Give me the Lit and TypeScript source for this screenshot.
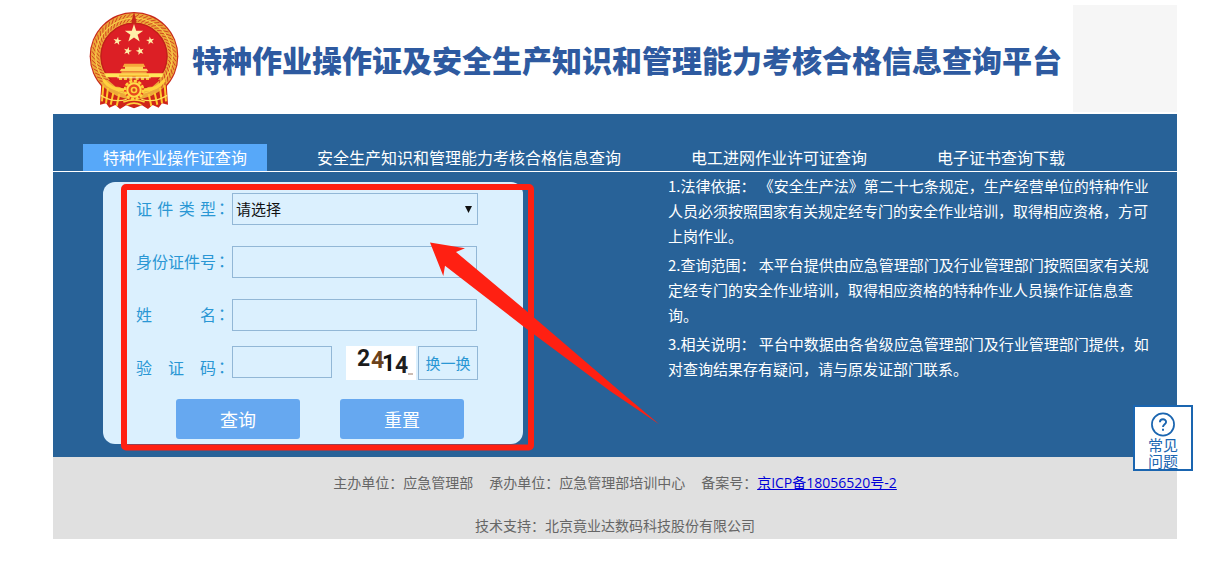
import { LitElement, html, css, svg } from "lit";
import { customElement, state } from "lit/decorators.js";

const star = (cx: number, cy: number, r: number, turn = 0) => {
  const pts: string[] = [];
  for (let i = 0; i < 10; i++) {
    const a = ((i * 36 - 90 + turn) * Math.PI) / 180;
    const d = i % 2 ? r * 0.39 : r;
    pts.push(`${(cx + d * Math.cos(a)).toFixed(1)},${(cy + d * Math.sin(a)).toFixed(1)}`);
  }
  return svg`<polygon fill="#fff0a8" points=${pts.join(" ")} />`;
};

@customElement("national-emblem")
class NationalEmblem extends LitElement {
  static styles = css`
    :host { display: block; }
    svg { display: block; width: 100px; height: 104px; }
  `;

  render() {
    const grains: unknown[] = [];
    for (let a = -222; a <= 42; a += 6) {
      const t = (a * Math.PI) / 180;
      const at = (r: number, d: number) => `${150 + r * Math.cos(t + d)} ${145 + r * Math.sin(t + d)}`;
      grains.push(svg`<path fill="none" stroke="#d2471f" stroke-width="3"
        d="M${at(104, 0)}L${at(114, 0.1)}M${at(117, 0.02)}L${at(127, 0.12)}" />`);
    }
    return html`<svg viewBox="0 0 300 312" role="img" aria-label="国徽">
      <path fill="#cf2418" d="M52 225L48 290L66 286L76 299L94 291L108 303L126 292L150 301L174 292L192 303L206 291L224 299L234 286L252 290L248 225Z" />
      <circle cx="150" cy="145" r="133" fill="#c8281b" />
      <circle cx="150" cy="145" r="115" fill="none" stroke="#eda93a" stroke-width="29" />
      ${grains}
      <circle cx="150" cy="145" r="115" fill="none" stroke="#fbd04a" stroke-width="3" />
      <circle cx="150" cy="145" r="99" fill="#dc1f25" stroke="#c3201b" stroke-width="4" />
      <path fill="#c8281b" d="M150 12L158 42L150 52L142 42Z" />
      ${star(150, 77, 29)} ${star(100, 99, 13, 10)} ${star(199, 98, 13, -10)}
      ${star(131, 129, 13, 15)} ${star(168, 129, 13, -15)}
      <path fill="#f6a83a" d="M121 167H179L184 177H116Z" />
      <path fill="#ffd25a" d="M123 176H177V182H123ZM112 182H188L193 190H107Z" />
      <path fill="#f2a33b" d="M112 190H188V197H112Z" />
      <path fill="#ffe65a" d="M62 196H238L234 208H66Z" />
      <path fill="#f8bd38" d="M105 200H195V216H105Z" />
      <path fill="#c8281b" d="M145 206H155V216H145ZM129 208H136V216H129ZM164 208H171V216H164ZM114 209H120V216H114ZM180 209H186V216H180Z" />
      <path fill="#fff0a0" d="M100 208H200V211H100Z" />
      <path fill="#d81f22" d="M72 216H228L205 236H95Z" />
      <path fill="none" stroke="#ffd23e" stroke-width="9" d="M58 216Q82 248 124 246M242 216Q218 248 176 246" />
      <path fill="none" stroke="#ffc52e" stroke-width="6" d="M58 232L54 280M72 240L66 286M88 254L80 290M106 258L98 294M242 232L246 280M228 240L234 286M212 254L220 290M194 258L202 294" />
      <path fill="none" stroke="#ffe05a" stroke-width="4" d="M50 262Q90 286 128 274M250 262Q210 286 172 274" />
      <circle cx="150" cy="246" r="30" fill="#e8491f" />
      <circle cx="150" cy="246" r="27" fill="none" stroke="#ffd23e" stroke-width="8" stroke-dasharray="9 5" />
      <circle cx="150" cy="246" r="20" fill="none" stroke="#ffdf4a" stroke-width="6" />
      <circle cx="150" cy="246" r="10" fill="#ffd23e" />
      <circle cx="150" cy="246" r="5" fill="#d5421d" />
      <path fill="none" stroke="#ffd23e" stroke-width="5" d="M118 282Q150 270 182 282M128 291Q150 280 172 291" />
    </svg>`;
  }
}

@customElement("app-root")
class AppRoot extends LitElement {
  @state() private current = 0;

  private tabs = [
    "特种作业操作证查询",
    "安全生产知识和管理能力考核合格信息查询",
    "电工进网作业许可证查询",
    "电子证书查询下载",
  ];

  private notes = [
    "1.法律依据： 《安全生产法》第二十七条规定，生产经营单位的特种作业人员必须按照国家有关规定经专门的安全作业培训，取得相应资格，方可上岗作业。",
    "2.查询范围： 本平台提供由应急管理部门及行业管理部门按照国家有关规定经专门的安全作业培训，取得相应资格的特种作业人员操作证信息查询。",
    "3.相关说明： 平台中数据由各省级应急管理部门及行业管理部门提供，如对查询结果存有疑问，请与原发证部门联系。",
  ];

  static styles = css`
    :host {
      display: block;
      font-family: "Noto Sans CJK SC", "Noto Sans", sans-serif;
      font-size: 16px;
      color: #333;
    }
    * { box-sizing: border-box; }
    .page { margin: 0 40px 0 53px; }
    .header {
      display: flex;
      align-items: flex-start;
      height: 114px;
      padding: 5px 0 0 31px;
    }
    .emblem { margin-top: 3px; }
    .title {
      flex: 1;
      margin: 32px 0 0 8px;
      font-size: 30px;
      line-height: 44px;
      font-weight: 900;
      color: #2e5aa0;
      white-space: nowrap;
    }
    .blank { width: 104px; height: 107px; background: #f6f6f6; }
    .main { background: #286298; padding-top: 30px; }
    .tabs {
      display: flex;
      gap: 30px;
      padding-left: 30px;
      border-bottom: 1px solid #fff;
    }
    .tab {
      font: inherit;
      line-height: 27px;
      padding: 0 20px;
      border: 0;
      background: none;
      color: #fff;
      white-space: nowrap;
    }
    .tab.on { background: #57a8f9; }
    .stage {
      position: relative;
      display: grid;
      grid-template-columns: 1fr 1fr;
      padding-bottom: 13px;
    }
    .panel {
      width: 420px;
      margin: 10px 0 0 50px;
      padding: 11px 45px 5px 33px;
      background: #dbf0fe;
      border-radius: 12px;
    }
    .row {
      display: flex;
      align-items: flex-start;
      height: 32px;
      margin-bottom: 21px;
    }
    .row.code { height: 34px; margin: -6px 0 19px; }
    .label {
      display: flex;
      width: 96px;
      line-height: 30px;
      color: #2a97d4;
      flex: none;
    }
    .code .label { line-height: 42px; }
    .name { width: 80px; white-space: nowrap; }
    .spread { text-align-last: justify; }
    .colon { font-family: "Noto Sans CJK TC", sans-serif; margin-left: -2px; }
    .field {
      width: 245px;
      height: 32px;
      padding: 0 5px;
      border: 1px solid #92b7d6;
      background: transparent;
      border-radius: 0;
      font: inherit;
      outline: 0;
    }
    .field.short { width: 100px; }
    .pick { display: grid; width: 246px; align-items: center; }
    .pick > * { grid-area: 1 / 1; }
    .pick .field {
      width: 100%;
      padding: 0 3px 2px;
      appearance: none;
      font-size: 15px;
      color: #111;
    }
    .caret { justify-self: end; margin-right: 6px; width: 7px; height: 7px; pointer-events: none; }
    .captcha { margin-left: 14px; flex: none; }
    .swap {
      width: 60px;
      height: 34px;
      margin-left: 2px;
      padding: 0 0 2px;
      border: 1px solid #92b7d6;
      background: none;
      font: inherit;
      font-size: 15px;
      color: #2a97d4;
      flex: none;
    }
    .actions { display: flex; gap: 40px; padding-left: 40px; }
    .action {
      width: 124px;
      height: 40px;
      padding: 0;
      border: 0;
      border-radius: 3px;
      background: #66a8f0;
      color: #fff;
      font: inherit;
      font-size: 18px;
    }
    .notes { padding: 1px 25px 0 53px; color: #fff; font-size: 15px; line-height: 25px; }
    .note { margin: 0 0 4px; }
    .mark {
      position: absolute;
      left: 68px;
      top: 12px;
      pointer-events: none;
    }
    .footer {
      display: grid;
      gap: 20px;
      padding: 14px 0 3px;
      background: #e0e0e0;
      color: #666;
      font-size: 14px;
      line-height: 22px;
      text-align: center;
    }
    .line { display: flex; justify-content: center; gap: 16px; }
    .link { color: #0000d8; font-family: "Open Sans", "Noto Sans CJK SC", sans-serif; }
    .faq {
      position: fixed;
      right: 24px;
      top: 405px;
      display: flex;
      flex-direction: column;
      align-items: center;
      width: 60px;
      height: 66px;
      padding: 5px 0 0;
      border: 2px solid #1a65b0;
      background: #fff;
      color: #1a65b0;
      font-size: 15px;
      line-height: 16px;
      text-decoration: none;
      text-align: center;
    }
    .ask { display: block; }
  `;

  private label(id: string, name: string, spread = false) {
    return html`<label class="label" for=${id}><span class="name ${spread ? "spread" : ""}">${name}</span><span class="colon">：</span></label>`;
  }

  render() {
    return html`
      <div class="page">
        <header class="header">
          <national-emblem class="emblem"></national-emblem>
          <h1 class="title">特种作业操作证及安全生产知识和管理能力考核合格信息查询平台</h1>
          <div class="blank"></div>
        </header>
        <main class="main">
          <nav class="tabs">
            ${this.tabs.map(
              (t, i) => html`<button class="tab ${i === this.current ? "on" : ""}" @click=${() => (this.current = i)}>${t}</button>`
            )}
          </nav>
          <div class="stage">
            <form class="panel" @submit=${(e: Event) => e.preventDefault()}>
              <div class="row">
                ${this.label("kind", "证件类型", true)}
                <span class="pick">
                  <select class="field" id="kind"><option>请选择</option></select>
                  <svg class="caret" viewBox="0 0 7 7"><path fill="#111" d="M0 0H7L3.5 7Z" /></svg>
                </span>
              </div>
              <div class="row">
                ${this.label("idno", "身份证件号")}
                <input class="field" id="idno" type="text" />
              </div>
              <div class="row">
                ${this.label("fullname", "姓　　　名")}
                <input class="field" id="fullname" type="text" />
              </div>
              <div class="row code">
                ${this.label("code", "验　证　码")}
                <input class="field short" id="code" type="text" />
                <svg class="captcha" width="70" height="34" viewBox="0 0 70 34" font-family="Roboto, sans-serif" font-size="23" font-weight="700">
                  <rect width="70" height="34" fill="#fff" />
                  <text x="11" y="20" fill="#1c1c1c">2</text>
                  <text x="25" y="22" fill="#6b421c">4</text>
                  <text x="36" y="25" fill="#111">1</text>
                  <text x="49" y="27" fill="#1f1f1f">4</text>
                  <path d="M62 28H67" stroke="#9a7a66" />
                </svg>
                <button class="swap" type="button">换一换</button>
              </div>
              <div class="actions">
                <button class="action" type="submit">查询</button>
                <button class="action" type="reset">重置</button>
              </div>
            </form>
            <section class="notes">${this.notes.map((n) => html`<p class="note">${n}</p>`)}</section>
            <svg class="mark" width="540" height="268" viewBox="121 184 540 268" aria-hidden="true">
              <rect x="124" y="187" width="407" height="260.5" rx="2" fill="none" stroke="#ff2012" stroke-width="6" stroke-linejoin="round" />
              <path fill="#ff2012" d="M430 242.5L465 248.3L456 252L523.5 308.5L622 393L659.5 424.5L610 391L523.5 326.5L445 265.7L443.3 276Z" />
            </svg>
          </div>
        </main>
        <footer class="footer">
          <div class="line">
            <span>主办单位：应急管理部</span>
            <span>承办单位：应急管理部培训中心</span>
            <span>备案号：<a class="link" href="#">京ICP备18056520号-2</a></span>
          </div>
          <div>技术支持：北京竟业达数码科技股份有限公司</div>
        </footer>
      </div>
      <a class="faq" href="#">
        <svg class="ask" width="26" height="26" viewBox="0 0 26 26" fill="none" stroke="#1a65b0" stroke-width="2">
          <circle cx="13" cy="13" r="11.5" stroke-width="1.8" />
          <path d="M9.8 10.6C9.8 6.6 16.2 6.6 16.2 10.3C16.2 12.6 13 12.8 13 15.6M13 17.4V19.6" />
        </svg>
        <span>常见<br />问题</span>
      </a>
    `;
  }
}
